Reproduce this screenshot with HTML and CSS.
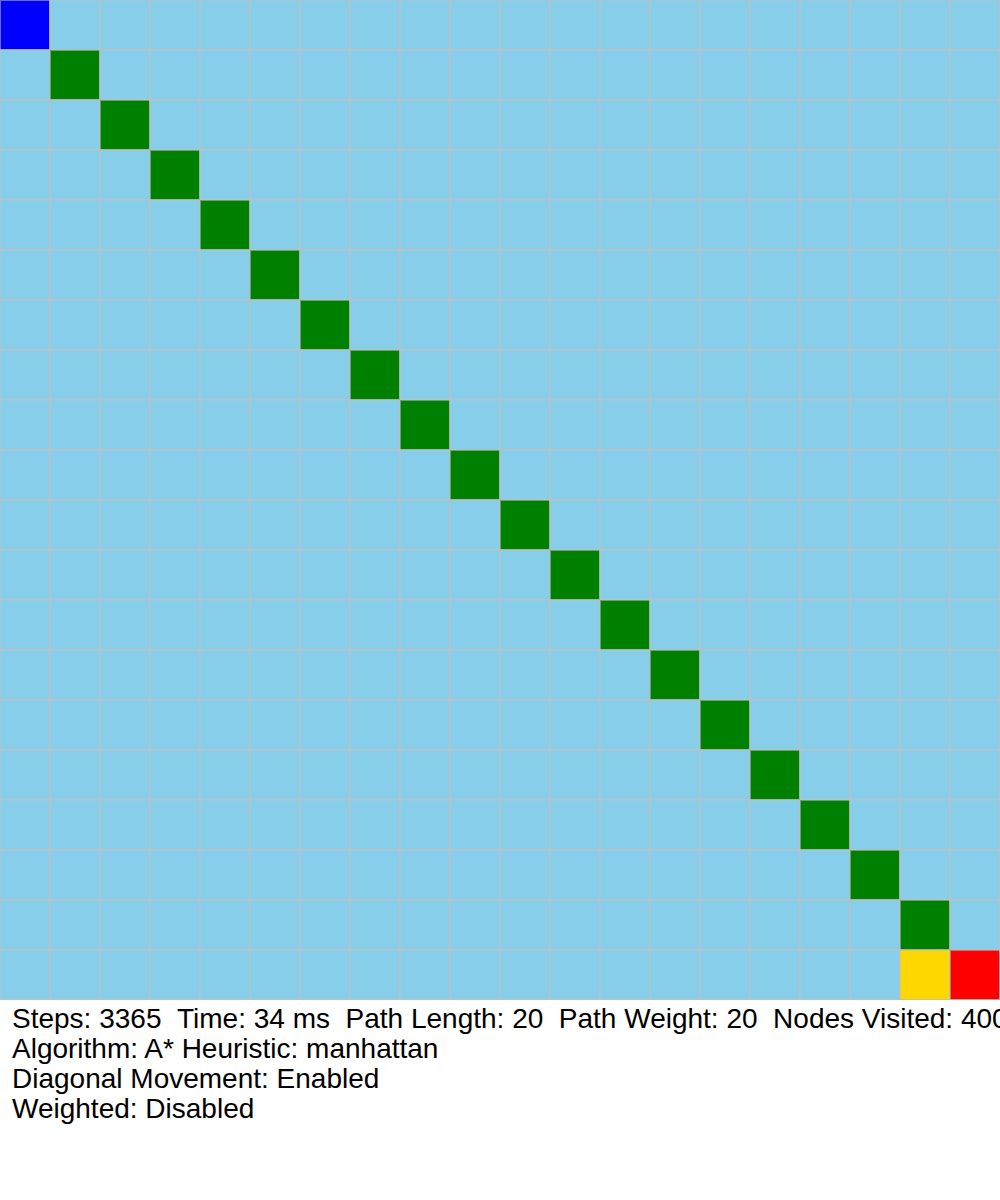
FILE: index.html
```html
<!DOCTYPE html>
<html>
<head>
  <title>Pathfinding Visualizer</title>
  <link rel="stylesheet" href="styles.css">
</head>
<body>
  <div id="grid"></div>
  <div id="stats">
    <div class="line">Steps: 3365&nbsp;&nbsp;Time: 34 ms&nbsp;&nbsp;Path Length: 20&nbsp;&nbsp;Path Weight: 20&nbsp;&nbsp;Nodes Visited: 400</div>
    <div class="line">Algorithm: A* Heuristic: manhattan</div>
    <div class="line">Diagonal Movement: Enabled</div>
    <div class="line">Weighted: Disabled</div>
  </div>

  <script type="text/javascript">
    // 20x20 board, start top-left, end bottom-right
    var size = 20;
    var grid = document.getElementById("grid");
    for (var r = 0; r < size; r++) {
      for (var c = 0; c < size; c++) {
        var cell = document.createElement("div");
        cell.className = "cell";
        if (r === 0 && c === 0) {
          cell.className += " start";
        } else if (r === size - 1 && c === size - 1) {
          cell.className += " end";
        } else if (r === size - 1 && c === size - 2) {
          cell.className += " current";
        } else if (r === c) {
          cell.className += " path";
        }
        grid.appendChild(cell);
      }
    }
  </script>
</body>
</html>
```

FILE: styles.css
```css
body {
  margin: 0;
  font-family: "Liberation Sans", Arial, sans-serif;
  overflow: hidden;
}

#grid {
  display: grid;
  grid-template-columns: repeat(20, 50px);
  grid-auto-rows: 50px;
  width: 1000px;
}

.cell {
  background: #87ceeb;
  box-shadow: inset 1px 1px 0 rgba(192, 192, 192, 0.55), inset -1px -1px 0 rgba(192, 192, 192, 0.85);
}

.start {
  background: #0000ff;
}

.end {
  background: #ff0000;
}

.current {
  background: #ffd700;
}

.path {
  background: #008000;
}

#stats {
  padding: 4px 0 0 12px;
  font-size: 28px;
  line-height: 30px;
  color: #000;
  white-space: nowrap;
  overflow: hidden;
}
```
